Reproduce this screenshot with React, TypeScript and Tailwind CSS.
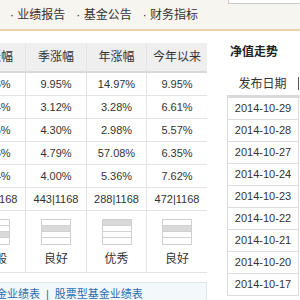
const cols = [
  { name: "月涨幅", vals: ["3.26%", "1.94%", "2.15%", "3.56%", "0.94%", "562|1168"], level: 2, label: "一般" },
  { name: "季涨幅", vals: ["9.95%", "3.12%", "4.30%", "4.79%", "4.00%", "443|1168"], level: 1, label: "良好" },
  { name: "年涨幅", vals: ["14.97%", "3.28%", "2.98%", "57.08%", "5.36%", "288|1168"], level: 0, label: "优秀" },
  { name: "今年以来", vals: ["9.95%", "6.61%", "5.57%", "6.35%", "7.62%", "472|1168"], level: 1, label: "良好" },
];

const dates = [
  "2014-10-29",
  "2014-10-28",
  "2014-10-27",
  "2014-10-24",
  "2014-10-23",
  "2014-10-22",
  "2014-10-21",
  "2014-10-20",
  "2014-10-17",
];

function Rating({ level }: { level: number }) {
  return (
    <div className="flex w-[30px] flex-col border border-[#d0d0d0] bg-white">
      {[0, 1, 2, 3].map((i) => (
        <div
          key={i}
          className={
            "h-[6px] " +
            (i < 3 ? "border-b border-[#d0d0d0] " : "") +
            (i === level ? "bg-[#d9d9d9]" : "bg-white")
          }
        />
      ))}
    </div>
  );
}

export default function App() {
  return (
    <div className="h-[300px] w-[300px] overflow-hidden bg-white font-['Liberation_Sans','Noto_Sans_CJK_SC',sans-serif] text-[#333]">
      {/* tab bar */}
      <div className="flex h-[31px] border-b-2 border-[#e8d4a8] bg-[#f7f5ef]">
        <nav className="flex items-center gap-[11px] pl-[10px] text-[12px]">
          <span>· 业绩报告</span>
          <span>· 基金公告</span>
          <span>· 财务指标</span>
        </nav>
        <div className="ml-auto h-[4px] w-[72px] border-b border-l border-[#c8c8c8] bg-white" />
      </div>

      <div className="mt-[12px] flex items-start">
        {/* performance table */}
        <div className="ml-[-35px] w-[242px] shrink-0">
          <div className="grid grid-cols-[61px_61px_60px_60px]">
            {cols.map((c, i) => (
              <div
                key={c.name}
                className={
                  "flex h-[30px] items-center justify-center border-b-2 border-b-[#d8d8d8] bg-[#efefef] text-[12px] " +
                  (i < 3 ? "border-r border-r-[#e4e4e4]" : "")
                }
              >
                {c.name}
              </div>
            ))}
            {[0, 1, 2, 3, 4, 5].map((r) =>
              cols.map((c, i) => (
                <div
                  key={c.name + r}
                  className={
                    "flex h-[23px] items-center justify-center border-b border-[#e4e4e4] text-[11px] " +
                    (i < 3 ? "border-r" : "")
                  }
                >
                  {c.vals[r]}
                </div>
              ))
            )}
            {cols.map((c, i) => (
              <div
                key={c.name + "rate"}
                className={
                  "flex h-[62px] flex-col items-center border-b border-[#e4e4e4] pt-[8px] " +
                  (i < 3 ? "border-r" : "")
                }
              >
                <Rating level={c.level} />
                <span className="mt-[7px] text-[12px] leading-[14px]">{c.label}</span>
              </div>
            ))}
          </div>

          {/* links */}
          <div className="ml-[-25px] mt-[9px] flex h-[24px] w-[267px] items-center gap-[6px] border border-[#dce8ee] bg-[#f3f8fb] pl-[11px] text-[11px] text-[#2b6cb0]">
            <span className="whitespace-nowrap">混合型基金业绩表</span>
            <span>|</span>
            <span className="whitespace-nowrap">股票型基金业绩表</span>
          </div>
        </div>

        {/* nav trend */}
        <div className="ml-[20px] flex w-[73px] shrink-0 flex-col">
          <div className="h-[30px] pl-[3px] text-[12px] font-bold leading-[18px] text-[#222]">净值走势</div>
          <div className="flex h-[25px] items-center border-b-[3px] border-[#dadada] pb-[1px]">
            <span className="w-[71px] text-center text-[12px]">发布日期</span>
            <span className="h-[13px] w-px bg-[#555]" />
          </div>
          {dates.map((d) => (
            <div
              key={d}
              className="flex h-[22px] w-[72px] items-center justify-center border-x border-b border-[#dcdcdc] text-[11px]"
            >
              {d}
            </div>
          ))}
        </div>
      </div>
    </div>
  );
}
